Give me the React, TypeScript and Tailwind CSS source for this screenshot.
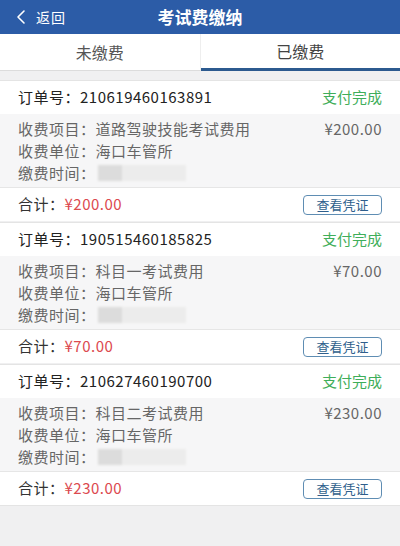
import { ChevronLeft } from "lucide-react";

type Order = {
  no: string;
  item: string;
  amount: string;
};

const orders: Order[] = [
  { no: "210619460163891", item: "道路驾驶技能考试费用", amount: "200.00" },
  { no: "190515460185825", item: "科目一考试费用", amount: "70.00" },
  { no: "210627460190700", item: "科目二考试费用", amount: "230.00" },
];

function OrderCard({ order }: { order: Order }) {
  return (
    <div className="bg-white border-t border-[#e4e4e4] tracking-[0.5px]">
      <div className="h-[33px] px-[18px] flex items-center justify-between text-[15px]">
        <span className="text-[#222]">订单号：{order.no}</span>
        <span className="text-[#3fae5a] tracking-normal">支付完成</span>
      </div>
      <div className="bg-[#f6f6f7] px-[18px] pt-[4px] pb-[3px] text-[15px] leading-[22px] text-[#666]">
        <div className="flex justify-between">
          <span>收费项目：{order.item}</span>
          <span>¥{order.amount}</span>
        </div>
        <div>收费单位：海口车管所</div>
        <div className="flex items-center">
          <span>缴费时间：</span>
          <div className="ml-[2px] flex h-[16px] w-[88px] blur-[1px]">
            <div className="w-[24px] bg-[#dcdcdc]" />
            <div className="flex-1 bg-[#ececec]" />
          </div>
        </div>
      </div>
      <div className="h-[34px] px-[18px] flex items-center justify-between border-t border-[#e6e6e6]">
        <span className="text-[15px] text-[#333]">
          合计：<span className="text-[#dc4a4f]">¥{order.amount}</span>
        </span>
        <button className="w-[79px] h-[20px] rounded-[4px] border border-[#5f8db3] text-[13px] leading-none text-[#2f5f8c] flex items-center justify-center tracking-normal">
          查看凭证
        </button>
      </div>
    </div>
  );
}

export default function App() {
  return (
    <div
      className="w-[400px] h-[546px] bg-[#f0f0f1] overflow-hidden"
      style={{ fontFamily: '"Noto Sans CJK SC", "Noto Sans", sans-serif' }}
    >
      <div className="h-[34px] bg-[#2c5ca7] relative flex items-center justify-center text-white">
        <div className="absolute left-[9px] top-0 h-full flex items-center gap-[3px]">
          <ChevronLeft className="w-[24px] h-[24px]" strokeWidth={1.6} />
          <span className="text-[14px] tracking-[1px]">返回</span>
        </div>
        <span className="text-[17px] font-bold">考试费缴纳</span>
      </div>
      <div className="h-[37px] bg-white flex">
        <div className="flex-1 flex items-center justify-center text-[16px] text-[#555] border-b border-[#dcdcdc] border-r border-r-[#eeeeee]">
          未缴费
        </div>
        <div className="flex-1 flex items-center justify-center text-[16px] text-[#444] border-b-[3px] border-[#2c5a8f]">
          已缴费
        </div>
      </div>
      <div className="h-[9px]" />
      <div className="flex flex-col gap-[1px]">
        {orders.map((o) => (
          <OrderCard key={o.no} order={o} />
        ))}
      </div>
      <div className="border-t border-[#e4e4e4]" />
    </div>
  );
}
